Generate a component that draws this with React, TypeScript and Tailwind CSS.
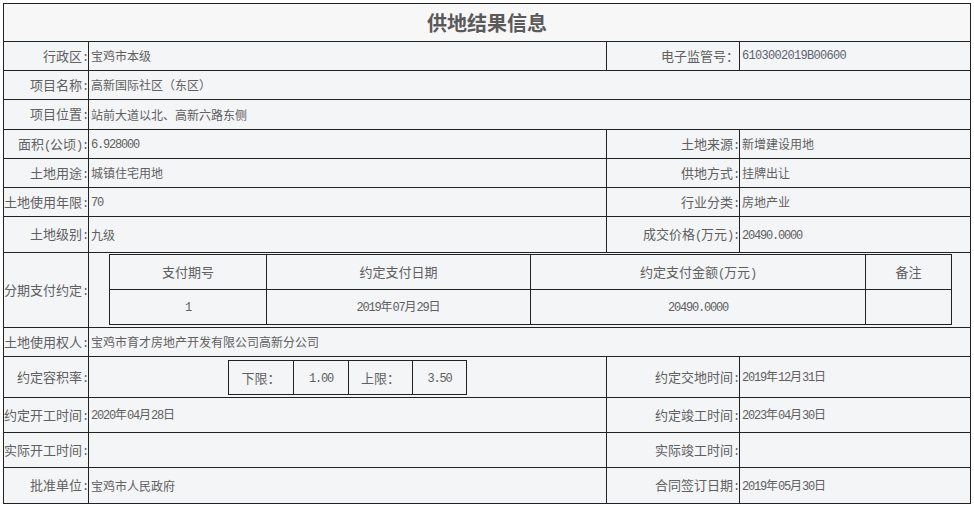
import React from "react";

function T({ s }: { s: string }) {
  const parts = s.split(/([\x20-\x7e]+)/).filter(Boolean);
  return (
    <span className="whitespace-nowrap">
      {parts.map((p, i) =>
        /^[\x20-\x7e]+$/.test(p) ? (
          <span
            key={i}
            className="font-[family-name:'Liberation_Mono',monospace] text-[12px] tracking-[-1.2px]"
          >
            {p}
          </span>
        ) : (
          <span key={i}>{p}</span>
        )
      )}
    </span>
  );
}

function Label({ s }: { s: string }) {
  return (
    <div className="w-[84px] shrink-0 flex items-center justify-end text-[13px] text-[#606060]">
      <T s={s} />
    </div>
  );
}

function Val({ s = "" }: { s?: string }) {
  return (
    <div className="w-[518px] shrink-0 border-l border-[#222] flex items-center pl-[2px] text-[12px] text-[#606060]">
      <T s={s} />
    </div>
  );
}

function RLabel({ s }: { s: string }) {
  return (
    <div className="w-[133px] shrink-0 border-l border-[#222] flex items-center justify-end text-[13px] text-[#606060]">
      <T s={s} />
    </div>
  );
}

function RVal({ s = "" }: { s?: string }) {
  return (
    <div className="flex-1 border-l border-[#222] flex items-center pl-[2px] text-[12px] text-[#606060]">
      <T s={s} />
    </div>
  );
}

export default function App() {
  return (
    <div className="bg-white min-h-[506px] pt-[3px] pl-[3px] font-[family-name:'Noto_Sans_CJK_SC','Liberation_Sans',sans-serif] text-[#606060]">
      <div className="w-[968px] border border-[#222] bg-[#f4f5f7]">
        <div className="h-[37px] flex items-center justify-center bg-[#f7f7f7] text-[20px] font-bold text-[#5a5a5a]">
          供地结果信息
        </div>

        <div className="flex h-[29px] border-t border-[#222]">
          <Label s="行政区:" />
          <Val s="宝鸡市本级" />
          <RLabel s="电子监管号：" />
          <div className="flex-1 border-l border-[#222] flex items-center pl-[2px] text-[12px] text-[#5b6270]">
            <span className="font-[family-name:'Liberation_Mono',monospace] tracking-[-0.7px]">
              6103002019B00600
            </span>
          </div>
        </div>

        <div className="flex h-[29px] border-t border-[#222]">
          <Label s="项目名称:" />
          <RVal s="高新国际社区（东区）" />
        </div>

        <div className="flex h-[30px] border-t border-[#222]">
          <Label s="项目位置:" />
          <RVal s="站前大道以北、高新六路东侧" />
        </div>

        <div className="flex h-[29px] border-t border-[#222]">
          <Label s="面积(公顷):" />
          <Val s="6.928000" />
          <RLabel s="土地来源:" />
          <RVal s="新增建设用地" />
        </div>

        <div className="flex h-[29px] border-t border-[#222]">
          <Label s="土地用途:" />
          <Val s="城镇住宅用地" />
          <RLabel s="供地方式:" />
          <RVal s="挂牌出让" />
        </div>

        <div className="flex h-[29px] border-t border-[#222]">
          <Label s="土地使用年限:" />
          <Val s="70" />
          <RLabel s="行业分类:" />
          <RVal s="房地产业" />
        </div>

        <div className="flex h-[36px] border-t border-[#222]">
          <Label s="土地级别:" />
          <Val s="九级" />
          <RLabel s="成交价格(万元):" />
          <RVal s="20490.0000" />
        </div>

        <div className="flex h-[75px] border-t border-[#222]">
          <Label s="分期支付约定:" />
          <div className="flex-1 border-l border-[#222] pl-[20px] pt-[1px]">
            <div className="w-[843px] border border-[#222] text-[13px] text-[#606060]">
              <div className="flex h-[34px]">
                <div className="w-[156px] flex items-center justify-center">支付期号</div>
                <div className="w-[264px] border-l border-[#222] flex items-center justify-center">约定支付日期</div>
                <div className="w-[335px] border-l border-[#222] flex items-center justify-center">
                  <T s="约定支付金额(万元)" />
                </div>
                <div className="flex-1 border-l border-[#222] flex items-center justify-center">备注</div>
              </div>
              <div className="flex h-[35px] border-t border-[#222] text-[12px]">
                <div className="w-[156px] flex items-center justify-center">
                  <T s="1" />
                </div>
                <div className="w-[264px] border-l border-[#222] flex items-center justify-center">
                  <T s="2019年07月29日" />
                </div>
                <div className="w-[335px] border-l border-[#222] flex items-center justify-center">
                  <T s="20490.0000" />
                </div>
                <div className="flex-1 border-l border-[#222]"></div>
              </div>
            </div>
          </div>
        </div>

        <div className="flex h-[29px] border-t border-[#222]">
          <Label s="土地使用权人:" />
          <RVal s="宝鸡市育才房地产开发有限公司高新分公司" />
        </div>

        <div className="flex h-[41px] border-t border-[#222]">
          <Label s="约定容积率:" />
          <div className="w-[518px] shrink-0 border-l border-[#222] flex justify-center pt-[3px]">
            <div className="flex h-[35px] w-[239px] border border-[#222] text-[13px] text-[#606060]">
              <div className="w-[64px] flex items-center justify-center">下限：</div>
              <div className="w-[55px] border-l border-[#222] flex items-center justify-center">
                <T s="1.00" />
              </div>
              <div className="w-[64px] border-l border-[#222] flex items-center justify-center">上限：</div>
              <div className="flex-1 border-l border-[#222] flex items-center justify-center">
                <T s="3.50" />
              </div>
            </div>
          </div>
          <RLabel s="约定交地时间:" />
          <RVal s="2019年12月31日" />
        </div>

        <div className="flex h-[35px] border-t border-[#222]">
          <Label s="约定开工时间:" />
          <Val s="2020年04月28日" />
          <RLabel s="约定竣工时间:" />
          <RVal s="2023年04月30日" />
        </div>

        <div className="flex h-[35px] border-t border-[#222]">
          <Label s="实际开工时间:" />
          <Val />
          <RLabel s="实际竣工时间:" />
          <RVal />
        </div>

        <div className="flex h-[36px] border-t border-[#222]">
          <Label s="批准单位:" />
          <Val s="宝鸡市人民政府" />
          <RLabel s="合同签订日期:" />
          <RVal s="2019年05月30日" />
        </div>
      </div>
    </div>
  );
}
